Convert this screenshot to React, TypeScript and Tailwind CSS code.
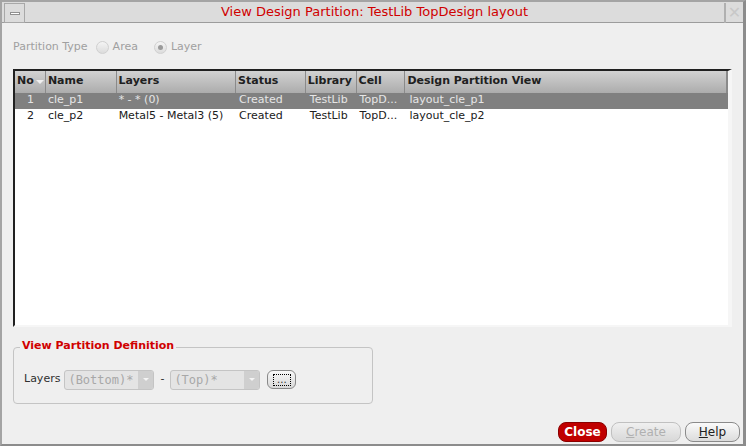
import React from "react"

type Row = { no: string; name: string; layers: string; status: string; lib: string; cell: string; view: string }

const rows: Row[] = [
    { no: "1", name: "cle_p1", layers: "* - * (0)", status: "Created", lib: "TestLib", cell: "TopD...", view: "layout_cle_p1" },
    { no: "2", name: "cle_p2", layers: "Metal5 - Metal3 (5)", status: "Created", lib: "TestLib", cell: "TopD...", view: "layout_cle_p2" },
]

const cols = [
    { label: "No", w: "w-[31px]" },
    { label: "Name", w: "w-[71px]" },
    { label: "Layers", w: "w-[120px]" },
    { label: "Status", w: "w-[70px]" },
    { label: "Library", w: "w-[51px]" },
    { label: "Cell", w: "w-[49px]" },
    { label: "Design Partition View", w: "w-[324px]" },
]

const Radio = ({ on }: { on?: boolean }) => (
    <span className="w-[13px] h-[13px] rounded-full border border-[#d0d0d0] bg-gradient-to-b from-[#f4f4f4] to-[#dcdcdc] flex items-center justify-center">
        {on && <span className="w-[5px] h-[5px] rounded-full bg-[#9a9a9a]" />}
    </span>
)

const Combo = ({ text }: { text: string }) => (
    <div className="w-[90px] h-[20px] rounded-[3px] border border-[#c4c4c4] bg-[#e4e4e4] flex items-center">
        <span className="flex-1 pl-[3px] text-[12px] text-[#a8a8a8] font-['DejaVu_Sans_Mono',monospace]">{text}</span>
        <span className="w-[15px] h-[18px] bg-[#cfcfcf] rounded-r-[2px] flex items-center justify-center">
            <span className="w-0 h-0 border-l-[3px] border-r-[3px] border-t-[3px] border-l-transparent border-r-transparent border-t-[#f4f4f4]" />
        </span>
    </div>
)

export default function App() {
    return (
        <div className="w-[746px] h-[446px] bg-[#efefef] border-l-2 border-t-2 border-[#a4a4a4] border-r-[3px] border-r-[#8c8c8c] border-b-2 border-b-[#8c8c8c] flex flex-col font-['DejaVu_Sans',sans-serif] text-[#303030] overflow-hidden">
            <div className="h-[21px] flex border-b border-[#9c9c9c] bg-[#dcdcdc]">
                <div className="w-[21px] h-[20px] ml-[2px] mt-[1px] border border-[#a8a8a8] flex items-center justify-center">
                    <span className="w-[10px] h-[3px] border border-[#909090] bg-white" />
                </div>
                <div className="flex-1 text-center text-[13px] leading-[20px] text-[#d00000]">View Design Partition: TestLib TopDesign layout</div>
                <div className="w-[19px] h-[20px] mt-[1px] border-l-2 border-[#b0b0b0] flex items-center justify-center text-[#c8c8c8] text-[16px] leading-none">✕</div>
            </div>

            <div className="flex items-center mt-[16px] ml-[11px] text-[11px] text-[#a0a0a0] gap-[4px]">
                <span className="mr-[4px]">Partition Type</span>
                <Radio />
                <span className="mr-[12px]">Area</span>
                <Radio on />
                <span>Layer</span>
            </div>

            <div className="ml-[11px] mt-[13px] w-[719px] h-[258px] border-t-2 border-l-2 border-[#202020] border-r-4 border-r-[#f6f6f6] border-b-2 border-b-[#f6f6f6] bg-white flex flex-col text-[11px]">
                <div className="flex h-[22px] bg-gradient-to-b from-[#d2d2d2] to-[#acacac] font-bold text-[#202020]">
                    {cols.map((c, i) => (
                        <div key={c.label} className={`${c.w} flex items-center pl-[2px] border-r border-[#8a8a8a] ${i === 6 ? "border-r-2" : ""}`}>
                            {c.label}
                            {i === 0 && <span className="ml-[2px] w-0 h-0 border-l-[4px] border-r-[4px] border-t-[4px] border-l-transparent border-r-transparent border-t-[#f0f0f0]" />}
                        </div>
                    ))}
                </div>
                {rows.map((r, i) => (
                    <div key={r.no} className={`flex h-[16px] items-center ${i === 0 ? "bg-[#808080] text-[#e6e6e6]" : "text-[#202020]"}`}>
                        <div className="w-[31px] pl-[12px]">{r.no}</div>
                        <div className="w-[71px] pl-[2px]">{r.name}</div>
                        <div className="w-[120px] pl-[2px]">{r.layers}</div>
                        <div className="w-[70px] pl-[3px]">{r.status}</div>
                        <div className="w-[51px] pl-[4px]">{r.lib}</div>
                        <div className="w-[49px] pl-[3px]">{r.cell}</div>
                        <div className="w-[324px] pl-[4px]">{r.view}</div>
                    </div>
                ))}
            </div>

            <div className="relative ml-[11px] mt-[20px] w-[360px] h-[57px] border border-[#c4c4c4] rounded-[4px]">
                <span className="absolute left-[6px] top-[-10px] px-[2px] bg-[#efefef] text-[11px] font-bold text-[#d00000] leading-[16px]">View Partition Definition</span>
                <div className="flex items-center mt-[22px] ml-[10px] text-[11px]">
                    <span className="mr-[4px]">Layers</span>
                    <Combo text="(Bottom)*" />
                    <span className="mx-[6px]">-</span>
                    <Combo text="(Top)*" />
                    <div className="ml-[7px] w-[29px] h-[19px] rounded-[6px] border border-[#888] bg-gradient-to-b from-[#f8f8f8] to-[#d8d8d8] flex items-center justify-center">
                        <span className="border border-dotted border-black px-[3px] text-[10px] leading-[10px]">...</span>
                    </div>
                </div>
            </div>

            <div className="flex justify-end gap-[4px] mt-auto mb-[2px] mr-[3px] text-[12px]">
                <div className="w-[49px] h-[20px] rounded-[8px] bg-[#c00000] border border-[#8a0000] text-white font-bold flex items-center justify-center">Close</div>
                <div className="w-[70px] h-[20px] rounded-[8px] bg-gradient-to-b from-[#f0f0f0] to-[#d8d8d8] border border-[#c0c0c0] text-[#b0b0b0] flex items-center justify-center"><span className="underline">C</span>reate</div>
                <div className="w-[55px] h-[20px] rounded-[8px] bg-gradient-to-b from-[#fafafa] to-[#dcdcdc] border border-[#8a8a8a] text-[#202020] flex items-center justify-center"><span className="underline">H</span>elp</div>
            </div>
        </div>
    )
}
